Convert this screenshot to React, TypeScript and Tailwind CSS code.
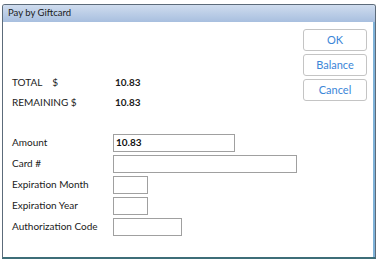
import React from 'react';

const FONT = { fontFamily: 'Lato, "Noto Sans", sans-serif' };

const FieldRow = ({ label, width, value }: { label: string; width: string; value?: string }) => (
    <div className="flex items-center h-[21px]">
        <span className="w-[101px] text-[10px] text-[#1a1a1a]">{label}</span>
        <div className={`${width} h-[18px] border border-[#a0a0a0] bg-white flex items-center px-[2px] text-[10px] font-bold text-[#111]`}>
            {value}
        </div>
    </div>
);

export default function App() {
    return (
        <div className="w-[377px] h-[261px] bg-white pt-[4px] pl-[2px]" style={FONT}>
            <div className="w-[374px] h-[255px] border border-[#5c6b7a] border-b-2 border-b-[#3d6e78] rounded-t-[3px] flex flex-col bg-white">
                {/* Title bar */}
                <div className="h-[17px] flex items-center pl-[5px] bg-gradient-to-b from-[#cfdcee] to-[#a8bfdf] text-[9.5px] text-[#1a1a1a] rounded-t-[2px]">
                    Pay by Giftcard
                </div>
                <div className="flex-1 flex border-r-2 border-r-[#7fb2d8]">
                    <div className="flex-1 pl-[9px] pt-[50px]">
                        <div className="flex items-center h-[20px] text-[10px] text-[#1a1a1a]">
                            <span className="w-[103px]">TOTAL&nbsp;&nbsp;&nbsp;&nbsp;$</span>
                            <span className="font-bold">10.83</span>
                        </div>
                        <div className="flex items-center h-[20px] text-[10px] text-[#1a1a1a]">
                            <span className="w-[103px]">REMAINING $</span>
                            <span className="font-bold">10.83</span>
                        </div>
                        <div className="mt-[20px] flex flex-col">
                            <FieldRow label="Amount" width="w-[122px]" value="10.83" />
                            <FieldRow label="Card #" width="w-[184px]" />
                            <FieldRow label="Expiration Month" width="w-[35px]" />
                            <FieldRow label="Expiration Year" width="w-[35px]" />
                            <FieldRow label="Authorization Code" width="w-[69px]" />
                        </div>
                    </div>
                    <div className="w-[70px] pt-[7px] flex flex-col gap-[3px]">
                        {['OK', 'Balance', 'Cancel'].map(b => (
                            <button key={b} className="w-[64px] h-[22px] border border-[#c4c4c4] rounded-[3px] bg-white text-[11px] text-[#3b86d8]">
                                {b}
                            </button>
                        ))}
                    </div>
                </div>
            </div>
        </div>
    );
}
